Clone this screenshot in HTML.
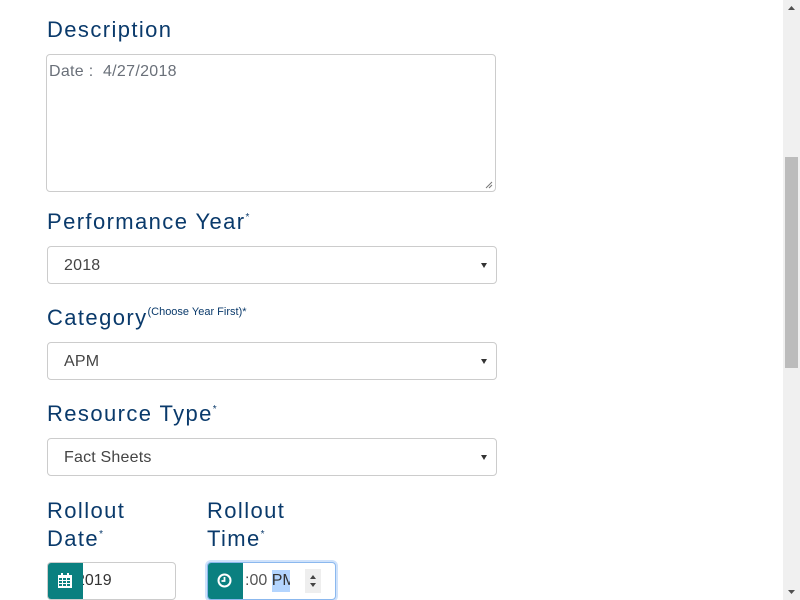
<!DOCTYPE html>
<html><head><style>
body{margin:0;width:800px;height:600px;overflow:hidden;background:#fff;font-family:"Liberation Sans",sans-serif;position:relative}
.l{position:absolute;color:#0a3a6b;font-size:22px;line-height:28px;white-space:nowrap;letter-spacing:1.4px}
.l sup{font-size:10px;vertical-align:top;position:relative;top:-4px;letter-spacing:0}
.box{position:absolute;border:1px solid #ccc;border-radius:4px;box-sizing:border-box;background:#fff}
.sel{height:38px;width:450px;left:47px;font-size:16px;color:#444;line-height:38px;padding-left:16px;letter-spacing:0.2px}
.sel:after{content:"";position:absolute;right:9px;top:16px;border:3px solid transparent;border-top:5px solid #333;border-bottom:0}
.add{position:absolute;background:#0a8080;top:-1px;bottom:-1px;left:-1px;width:36px;border-radius:4px 0 0 4px}
</style></head><body>
<div class="l" style="left:47px;top:16px">Description</div>
<div class="box" style="left:46px;top:54px;width:450px;height:138px;font-size:16px;color:#6a7079;padding:8px 2px;letter-spacing:0.3px">Date :&nbsp; 4/27/2018
<svg style="position:absolute;right:2px;bottom:2px" width="8" height="8"><path d="M1 7L7 1M4 7L7 4" stroke="#777"/></svg></div>
<div class="l" style="left:47px;top:208px">Performance Year<sup>*</sup></div>
<div class="box sel" style="top:246px">2018</div>
<div class="l" style="left:47px;top:304px">Category<sup style="font-size:11px;top:-6px">(Choose Year First)*</sup></div>
<div class="box sel" style="top:342px">APM</div>
<div class="l" style="left:47px;top:400px">Resource Type<sup>*</sup></div>
<div class="box sel" style="top:438px">Fact Sheets</div>
<div class="l" style="left:47px;top:497px">Rollout<br>Date<sup>*</sup></div>
<div class="l" style="left:207px;top:497px">Rollout<br>Time<sup>*</sup></div>
<div class="box" style="left:47px;top:562px;width:129px;height:38px;font-size:16px;color:#333;line-height:36px;padding-left:28px;overflow:hidden">
<div class="add" style="z-index:1"><svg style="position:absolute;left:11px;top:11px" width="14" height="15"><rect x="0" y="2" width="14" height="13" fill="#fff"/><g fill="#0a8080"><rect x="1" y="5" width="3" height="2"/><rect x="5" y="5" width="3" height="2"/><rect x="9" y="5" width="3" height="2"/><rect x="1" y="8" width="3" height="2"/><rect x="5" y="8" width="3" height="2"/><rect x="9" y="8" width="3" height="2"/><rect x="1" y="11" width="3" height="2"/><rect x="5" y="11" width="3" height="2"/><rect x="9" y="11" width="3" height="2"/></g><rect x="3" y="0" width="2" height="3" fill="#fff"/><rect x="9" y="0" width="2" height="3" fill="#fff"/></svg></div>2019</div>
<div class="box" style="left:207px;top:562px;width:129px;height:38px;font-size:16px;color:#555;line-height:36px;padding-left:37px;border-color:#8bb8ee;box-shadow:0 0 0 2px #cfe2fb;overflow:hidden;white-space:nowrap">
<div class="add"><svg style="position:absolute;left:10px;top:11px" width="15" height="15"><circle cx="7.5" cy="7.5" r="6" fill="none" stroke="#fff" stroke-width="2"/><path d="M7.5 4v4h-3" stroke="#fff" stroke-width="1.8" fill="none"/></svg></div>:00 <span style="background:#b4d5fe;color:#333;display:inline-block;width:18px;overflow:hidden;vertical-align:top;line-height:22px;margin-top:7px">PM</span>
<div style="position:absolute;left:97px;top:6px;width:16px;height:24px;background:#eee"><svg width="16" height="24"><path d="M5 10l3-4 3 4zM5 14l3 4 3-4z" fill="#444"/></svg></div></div>
<div style="position:absolute;left:783px;top:0;width:17px;height:600px;background:#f0f0f0"></div>
<div style="position:absolute;left:785px;top:157px;width:13px;height:211px;background:#bcbcbc"></div>
<svg style="position:absolute;left:783px;top:0" width="17" height="600"><path d="M5 10l3.5-4 3.5 4z" fill="#505050"/><path d="M5 590l3.5 4 3.5-4z" fill="#505050"/></svg>
</body></html>
